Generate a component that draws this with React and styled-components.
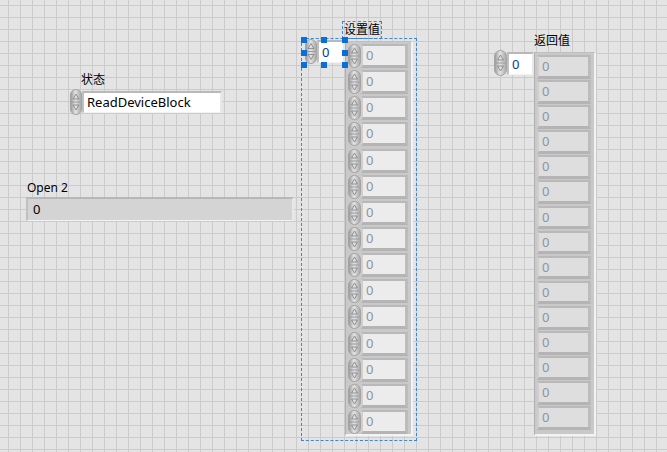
import React from 'react';
import styled, { createGlobalStyle } from 'styled-components';

const GlobalStyle = createGlobalStyle`
  html, body {
    margin: 0;
    padding: 0;
  }
  body {
    width: 667px;
    height: 452px;
    overflow: hidden;
    font-family: "Noto Sans", "Noto Sans CJK SC", sans-serif;
  }
`;

const Panel = styled.div`
  position: relative;
  width: 667px;
  height: 452px;
  background-color: #e4e4e4;
  background-image:
    linear-gradient(to right, #cbcbcb 1px, transparent 1px),
    linear-gradient(to bottom, #cbcbcb 1px, transparent 1px);
  background-size: 12px 12px;
  background-position: 8px 5px;
  overflow: hidden;
`;

// a control on the free canvas of the front panel: label above, body below
const Control = styled.div`
  position: absolute;
  left: ${(p) => p.$x}px;
  top: ${(p) => p.$y}px;
  display: flex;
  flex-direction: column;
  align-items: flex-start;
`;

const Label = styled.div`
  font-size: 12px;
  line-height: 16px;
  color: #000;
  white-space: nowrap;
  margin-left: ${(p) => p.$indent || 0}px;
  margin-bottom: ${(p) => p.$below || 0}px;
  padding: ${(p) => (p.$selected ? '0 1px' : '0')};
  border: ${(p) => (p.$selected ? '1px dashed #3f86d0' : '0')};
`;

const ControlRow = styled.div`
  display: flex;
  align-items: ${(p) => p.$align || 'center'};
`;

const Box = styled.div`
  box-sizing: border-box;
  width: ${(p) => p.$w}px;
  height: ${(p) => p.$h || 22}px;
  background: ${(p) => p.$bg || '#fff'};
  border-style: solid;
  border-width: 2px 2px 1px 2px;
  border-color: #b8b8b8 #e8e8e8 #f2f2f2 #c0c0c0;
  font-size: 13px;
  line-height: ${(p) => (p.$h || 22) - 3}px;
  padding-left: ${(p) => p.$pad || 3}px;
  color: ${(p) => p.$color || '#000'};
  white-space: nowrap;
  overflow: hidden;
`;

const SpinSvg = styled.svg`
  display: block;
  flex: none;
`;

function Spinner({ h = 26, w = 12 }) {
  const mid = h / 2;
  const id = `sg${h}${w}`;
  return (
    <SpinSvg width={w} height={h} viewBox={`0 0 ${w} ${h}`}>
      <defs>
        <linearGradient id={id} x1="0" x2="1" y1="0" y2="0">
          <stop offset="0" stopColor="#959595" />
          <stop offset="0.45" stopColor="#e4e4e4" />
          <stop offset="1" stopColor="#a5a5a5" />
        </linearGradient>
      </defs>
      <rect x="0.5" y="0.5" width={w - 1} height={h - 1} rx={w / 2 - 0.5} fill={`url(#${id})`} stroke="#a3a3a3" />
      <line x1="1.5" x2={w - 1.5} y1={mid} y2={mid} stroke="#9c9c9c" />
      <path d={`M${w / 2} ${mid - 8} L${w / 2 + 3} ${mid - 3} L${w / 2 - 3} ${mid - 3} Z`} fill="none" stroke="#8a8a8a" strokeWidth="0.9" />
      <path d={`M${w / 2} ${mid + 8} L${w / 2 + 3} ${mid + 3} L${w / 2 - 3} ${mid + 3} Z`} fill="none" stroke="#8a8a8a" strokeWidth="0.9" />
    </SpinSvg>
  );
}

const Selection = styled.div`
  position: absolute;
  left: ${(p) => p.$x}px;
  top: ${(p) => p.$y}px;
  width: ${(p) => p.$w}px;
  height: ${(p) => p.$h}px;
  box-sizing: border-box;
  border: 1px dashed #3f86d0;
  pointer-events: none;
`;

const Handle = styled.div`
  position: absolute;
  left: ${(p) => p.$x}px;
  top: ${(p) => p.$y}px;
  width: 6px;
  height: 6px;
  background: #0a6fd6;
`;

const ArrayFrame = styled.div`
  box-sizing: border-box;
  display: flex;
  flex-direction: column;
  gap: ${(p) => p.$gap}px;
  width: ${(p) => p.$w}px;
  height: ${(p) => p.$h}px;
  margin-top: ${(p) => p.$top || 0}px;
  padding: 2px 3px 2px 2px;
  background: #c9c9c9;
  border-style: solid;
  border-width: 1px 2px 2px 1px;
  border-color: #bfbfbf #f3f3f3 #f3f3f3 #b0b0b0;
`;

const Element = styled.div`
  display: flex;
  align-items: center;
  height: ${(p) => p.$h}px;
  flex: none;
`;

const Cell = styled.div`
  box-sizing: border-box;
  flex: 1;
  height: 100%;
  background: ${(p) => p.$bg};
  border-style: solid;
  border-width: 2px 3px 3px 2px;
  border-color: #b9b9b9 #bcbcbc #b4b4b4 #cfcfcf;
  font-size: 13px;
  line-height: ${(p) => p.$lh}px;
  padding-left: 3px;
  color: #8f93a3;
`;

const N = 15;

function SetArray() {
  return (
    <ArrayFrame $w={68} $h={395} $gap={2.15} $top={2}>
      {Array.from({ length: N }, (_, i) => (
        <Element key={i} $h={24}>
          <Spinner h={24} w={13} />
          <Cell $bg="#ececec" $lh={19}>0</Cell>
        </Element>
      ))}
    </ArrayFrame>
  );
}

function ReturnArray() {
  return (
    <ArrayFrame $w={62} $h={384} $gap={1.5} $top={2}>
      {Array.from({ length: N }, (_, i) => (
        <Element key={i} $h={23.6}>
          <Cell $bg="#dedede" $lh={18}>0</Cell>
        </Element>
      ))}
    </ArrayFrame>
  );
}

export default function App() {
  return (
    <>
      <GlobalStyle />
      <Panel>
        <Control $x={70} $y={72}>
          <Label $indent={11} $below={1}>状态</Label>
          <ControlRow>
            <Spinner h={26} w={12} />
            <Box $w={140} $h={22}>ReadDeviceBlock</Box>
          </ControlRow>
        </Control>

        <Control $x={26} $y={180}>
          <Label $indent={1} $below={1}>Open 2</Label>
          <Box $w={268} $h={24} $bg="#d4d4d4" $pad={5}>0</Box>
        </Control>

        {/* 设置值 array, selected */}
        <Control $x={305} $y={21}>
          <Label $indent={37} $selected>设置值</Label>
          <ControlRow $align="flex-start">
            <ControlRow>
              <Spinner h={25} w={12} />
              <Box $w={28} $h={23} $color="#0a3a8a">0</Box>
            </ControlRow>
            <SetArray />
          </ControlRow>
        </Control>
        <Selection $x={301} $y={38} $w={116} $h={403} />
        <Handle $x={301} $y={37} />
        <Handle $x={321} $y={37} />
        <Handle $x={342} $y={37} />
        <Handle $x={301} $y={50} />
        <Handle $x={342} $y={50} />
        <Handle $x={301} $y={62} />
        <Handle $x={321} $y={62} />
        <Handle $x={342} $y={62} />

        {/* 返回值 array */}
        <Control $x={494} $y={33}>
          <Label $indent={40} $below={1}>返回值</Label>
          <ControlRow $align="flex-start">
            <ControlRow>
              <Spinner h={26} w={13} />
              <Box $w={27} $h={23} $color="#0a3a8a">0</Box>
            </ControlRow>
            <ReturnArray />
          </ControlRow>
        </Control>
      </Panel>
    </>
  );
}
